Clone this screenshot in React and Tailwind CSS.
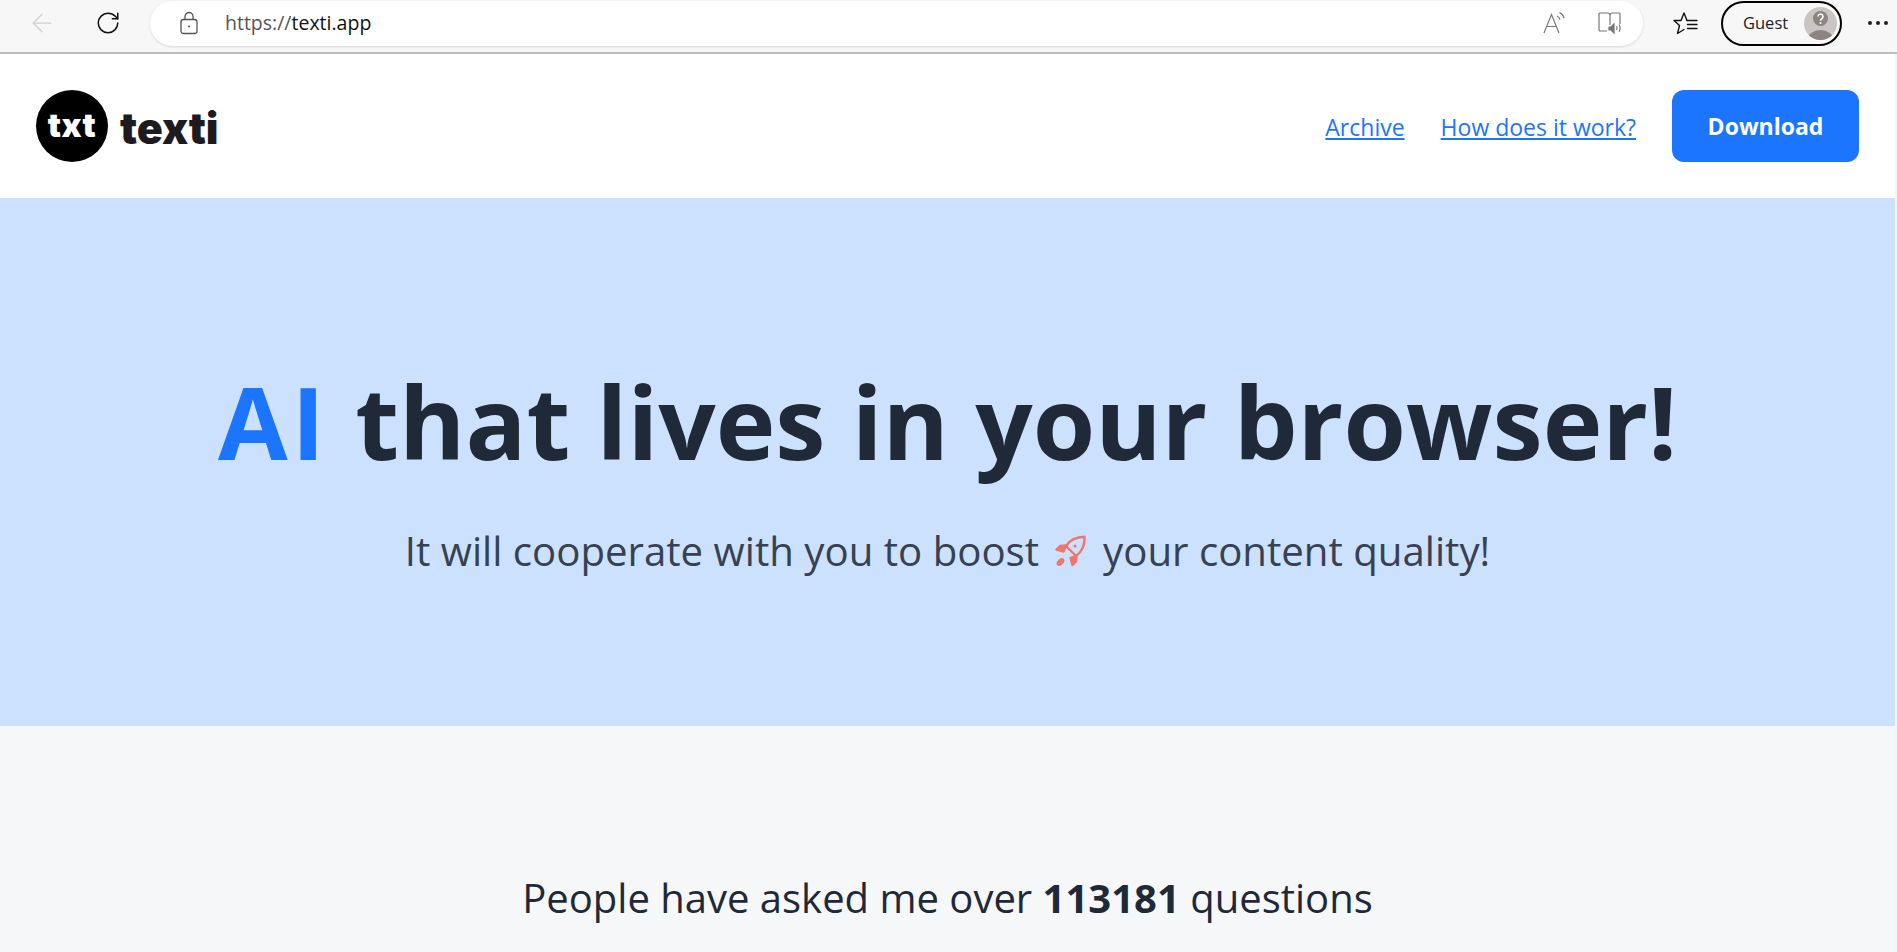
import { RotateCw, ArrowLeft } from "lucide-react";

function Lock() {
  return (
    <svg width="20" height="24" viewBox="0 0 20 24" fill="none" stroke="#555" strokeWidth="1.3">
      <rect x="2" y="8.5" width="16" height="14" rx="2.5" />
      <path d="M6 8.5V5.5a4 4 0 0 1 8 0v3" />
      <circle cx="10" cy="15.5" r="1" fill="#555" stroke="none" />
    </svg>
  );
}

function ReadAloud() {
  return (
    <svg width="26" height="24" viewBox="0 0 26 24" fill="none" stroke="#777" strokeWidth="1.2">
      <path d="M2 22 9.5 3.5 17 22M4.8 15.5h9.4" />
      <path d="M15 5c1.600.8 2.600 2 3 3.600M17.500 1.500c2.400 1.200 4 3.200 4.600 5.600" />
    </svg>
  );
}

function ReaderMode() {
  return (
    <svg width="26" height="24" viewBox="0 0 26 24" fill="none" stroke="#777" strokeWidth="1.2">
      <path d="M10 20H3a1 1 0 0 1-1-1V3a1 1 0 0 1 1-1h8a2 2 0 0 1 2 2v10" />
      <path d="M13 4a2 2 0 0 1 2-2h7a1 1 0 0 1 1 1v10" />
      <path d="M12 16h2l3-3v9l-3-3h-2z" fill="#777" />
      <path d="M19.500 15c.8 1.200.8 3 0 4.200M22 13.500c1.300 2 1.300 5.200 0 7.200" />
    </svg>
  );
}

function Favorites() {
  return (
    <svg width="26" height="24" viewBox="0 0 26 24" fill="none" stroke="#111" strokeWidth="1.4" strokeLinejoin="round" strokeLinecap="round">
      <path d="M14 9.500 11 2 8 9.500H1l5.500 5L4.500 22.500l6.500-4" />
      <path d="M14 9.500h10M14.500 13.500h9.500M14.500 17.500h9.500" />
    </svg>
  );
}

function Avatar() {
  return (
    <svg width="33" height="33" viewBox="0 0 33 33">
      <clipPath id="av">
        <circle cx="16.5" cy="16.5" r="16.5" />
      </clipPath>
      <g clipPath="url(#av)">
        <rect width="33" height="33" fill="#c9c5c4" />
        <ellipse cx="16.5" cy="33" rx="13" ry="10" fill="#8a8583" />
        <circle cx="16.5" cy="11.5" r="7.5" fill="#8a8583" />
        <path d="M14 9.500a2.500 2.500 0 1 1 3.800 2.200c-.9.500-1.300 1-1.300 2" fill="none" stroke="#fff" strokeWidth="1.6" />
        <circle cx="16.5" cy="16" r="1" fill="#fff" />
      </g>
    </svg>
  );
}

function Rocket() {
  return (
    <svg width="32" height="32" viewBox="0 0 32 32" fill="none" stroke="#f0766b" strokeWidth="2.4" strokeLinejoin="round">
      <path d="M11 11C15 5 21.500 2 29.500 1.800 30 9.500 27 16.500 21 21L11 11Z" />
      <path d="M11 10.500 5 11 1.500 14.500 8.500 16.500Z" fill="#f0766b" />
      <path d="M21.500 20.500 21 26.500 17.500 30 15.500 23Z" fill="#f0766b" />
      <circle cx="20" cy="11" r="1.600" fill="#f0766b" stroke="none" />
      <ellipse cx="5.500" cy="27" rx="4.500" ry="3" transform="rotate(-45 5.500 27)" fill="#f0766b" stroke="none" />
    </svg>
  );
}

export default function App() {
  return (
    <div className="h-[952px] overflow-hidden bg-[#f5f5f5] font-['Open_Sans',sans-serif]">
      {/* browser chrome */}
      <div className="h-[54px] bg-[#f7f7f7] border-b-2 border-[#bdbdbd] flex items-center pb-[6px]">
        <ArrowLeft className="ml-[27px] w-[30px] h-[30px] text-[#d0d0d0]" strokeWidth={1} />
        <RotateCw className="ml-[38px] w-[26px] h-[26px] text-[#111]" strokeWidth={1.4} />
        <div className="ml-[29px] w-[1493px] h-[45px] rounded-full bg-white shadow-sm flex items-center pl-[29px] pr-[20px]">
          <Lock />
          <span className="ml-[26px] text-[19.5px] text-[#555]">
            https://<span className="text-[#111]">texti.app</span>
          </span>
          <div className="ml-auto flex items-center gap-[29px]">
            <ReadAloud />
            <ReaderMode />
          </div>
        </div>
        <div className="ml-[30px] flex">
          <Favorites />
        </div>
        <div className="ml-[22px] w-[121px] h-[45px] rounded-full border-2 border-black flex items-center pl-[20px] pr-[3px] justify-between">
          <span className="text-[16.5px] text-[#222]">Guest</span>
          <Avatar />
        </div>
        <div className="ml-[26px] flex gap-[4px]">
          <span className="w-[4px] h-[4px] rounded-full bg-[#222]" />
          <span className="w-[4px] h-[4px] rounded-full bg-[#222]" />
          <span className="w-[4px] h-[4px] rounded-full bg-[#222]" />
        </div>
      </div>

      <div className="mr-[2px]">
        {/* nav */}
        <nav className="h-[144px] bg-white flex items-center justify-between pl-[36px] pr-[36px]">
          <div className="flex items-center">
            <div className="w-[72px] h-[72px] rounded-full bg-black text-white flex items-center justify-center font-['Inter',sans-serif] font-black text-[33px] tracking-[0.5px]">
              txt
            </div>
            <span className="ml-[12px] mt-[5px] font-['Inter',sans-serif] font-black text-[43px] leading-none text-[#1d1b1f]">
              texti
            </span>
          </div>
          <div className="flex items-center">
            <a className="pt-[2px] text-[23px] text-[#1c75ff] underline">Archive</a>
            <a className="ml-[36px] pt-[2px] text-[23px] text-[#1c75ff] underline">How does it work?</a>
            <button className="ml-[36px] w-[187px] h-[72px] rounded-xl bg-[#1c75ff] text-white text-[23px] font-bold">
              Download
            </button>
          </div>
        </nav>

        {/* hero */}
        <section className="h-[528px] bg-[#cce1fe] flex flex-col items-center pt-[173px]">
          <h1 className="text-[101px] leading-none font-bold text-[#1f2937] whitespace-nowrap h-[96px]">
            <span className="text-[#1c75ff] tracking-[4px]">AI</span> that lives in your browser!
          </h1>
          <p className="mt-[64px] text-[40.2px] leading-none text-[#374151] flex items-center whitespace-nowrap">
            It will cooperate with you to boost
            <span className="mx-[16px] flex">
              <Rocket />
            </span>
            your content quality!
          </p>
        </section>

        {/* stats */}
        <section className="bg-[#f6f7f9] h-[226px] pt-[152px] text-center">
          <p className="text-[40px] leading-none text-[#1f2937]">
            People have asked me over <b>113181</b> questions
          </p>
        </section>
      </div>
    </div>
  );
}
